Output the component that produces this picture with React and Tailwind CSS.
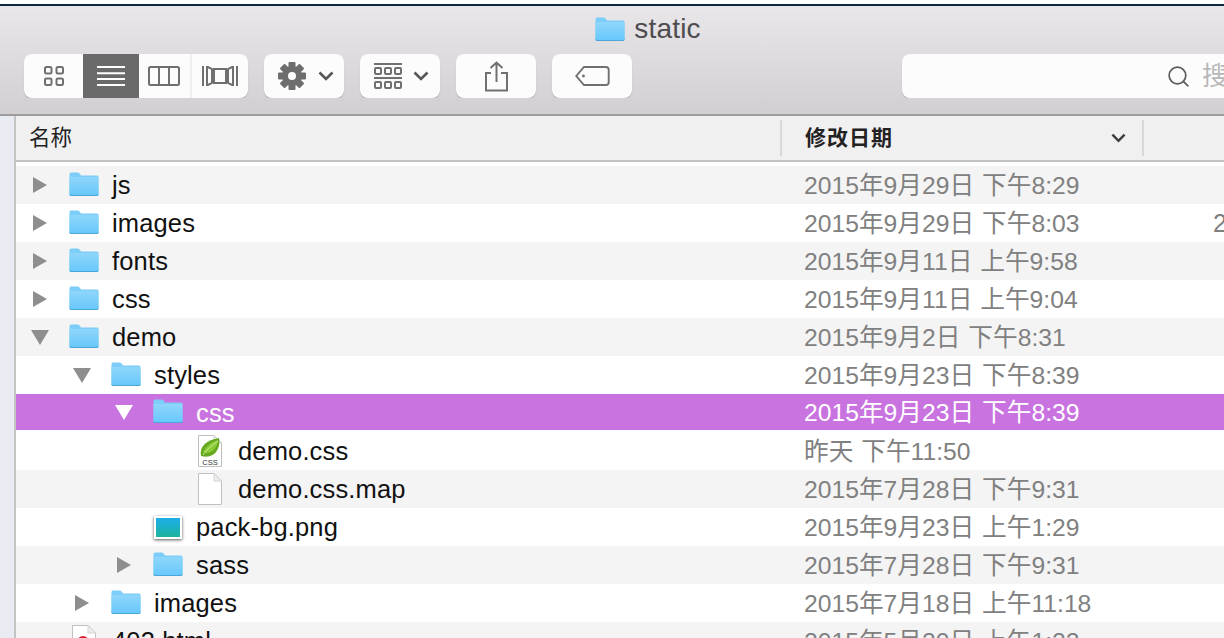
import { Search } from "lucide-react";

const FONT = "font-['Liberation_Sans','Noto_Sans_CJK_SC',sans-serif]";

const ROWS = [
  { name: "js", date: "2015年9月29日 下午8:29", depth: 0, arrow: "right", icon: "folder" },
  { name: "images", date: "2015年9月29日 下午8:03", depth: 0, arrow: "right", icon: "folder", size: "2" },
  { name: "fonts", date: "2015年9月11日 上午9:58", depth: 0, arrow: "right", icon: "folder" },
  { name: "css", date: "2015年9月11日 上午9:04", depth: 0, arrow: "right", icon: "folder" },
  { name: "demo", date: "2015年9月2日 下午8:31", depth: 0, arrow: "down", icon: "folder" },
  { name: "styles", date: "2015年9月23日 下午8:39", depth: 1, arrow: "down", icon: "folder" },
  { name: "css", date: "2015年9月23日 下午8:39", depth: 2, arrow: "down", icon: "folder", selected: true },
  { name: "demo.css", date: "昨天 下午11:50", depth: 3, icon: "css" },
  { name: "demo.css.map", date: "2015年7月28日 下午9:31", depth: 3, icon: "file" },
  { name: "pack-bg.png", date: "2015年9月23日 上午1:29", depth: 2, icon: "png" },
  { name: "sass", date: "2015年7月28日 下午9:31", depth: 2, arrow: "right", icon: "folder" },
  { name: "images", date: "2015年7月18日 上午11:18", depth: 1, arrow: "right", icon: "folder" },
  { name: "403.html", date: "2015年5月20日 上午1:22", depth: 0, icon: "html" },
];

function Folder({ className }) {
  return (
    <svg viewBox="0 0 30 24" className={className}>
      <defs>
        <linearGradient id="folderBody" x1="0" y1="0" x2="0" y2="1">
          <stop offset="0" stopColor="#8fd6fb" />
          <stop offset="1" stopColor="#68c8fb" />
        </linearGradient>
      </defs>
      <path d="M0.5 2 Q0.5 0.5 2 0.5 H9 Q10 0.5 11 2 L12 3.5 H28 Q29.5 3.5 29.5 5 V22 Q29.5 23.5 28 23.5 H2 Q0.5 23.5 0.5 22 Z" fill="#7ccdf7" />
      <path d="M0.5 5 H29.5 V22 Q29.5 23 28 23 H2 Q0.5 23 0.5 22 Z" fill="url(#folderBody)" />
      <path d="M0.5 22.4 Q0.7 23.5 2 23.5 H28 Q29.3 23.5 29.5 22.4" fill="none" stroke="#4ba6d8" strokeWidth="1" />
    </svg>
  );
}

function BlankFile({ children }) {
  return (
    <svg viewBox="0 0 24 32" className="w-[24px] h-[32px]">
      <path d="M0.5 0.5 H16 L23.5 8 V31.5 H0.5 Z" fill="#fff" stroke="#c0c0c0" strokeWidth="1" />
      <path d="M16 0.5 V8 H23.5 Z" fill="#ececec" stroke="#d4d4d4" strokeWidth="1" />
      {children}
    </svg>
  );
}

function RowIcon({ type }) {
  if (type === "folder") return <Folder className="w-[30px] h-[24px] mb-[2px]" />;
  if (type === "file") return <BlankFile />;
  if (type === "css") {
    return (
      <BlankFile>
        <path d="M3 21 C1 11 9 5 21 3 C23 13 17 23 6 21.5 Z" fill="#66a81f" />
        <path d="M5 17 C9 10 14 7 20 5 C20 11 15 18 8 18 Z" fill="#8ccc3a" />
        <path d="M5 20 C9 14 14 10 20 6" fill="none" stroke="#c3e88a" strokeWidth="1" />
        <text x="12" y="29.5" textAnchor="middle" fontSize="7.5" fontFamily="Liberation Sans" fill="#333">CSS</text>
      </BlankFile>
    );
  }
  if (type === "html") {
    return (
      <BlankFile>
        <circle cx="11" cy="17" r="6" fill="#d8232f" />
      </BlankFile>
    );
  }
  return (
    <div className="ml-[1px] w-[28px] h-[23px] border-[2px] border-white bg-gradient-to-b from-[#1eaeea] to-[#1fb29c] shadow-[0_1px_3px_rgba(0,0,0,0.65)]" />
  );
}

function Arrow({ dir, selected }) {
  const color = selected ? "#ffffff" : "#8e8e8e";
  return (
    <svg viewBox="0 0 18 16" className="w-[18px] h-[16px]">
      {dir === "right" ? <path d="M2 0 L16 8 L2 16 Z" fill={color} /> : <path d="M0 1 H18 L9 16 Z" fill={color} />}
    </svg>
  );
}

function Row({ row, index }) {
  const bg = row.selected ? "bg-[#c973e0] h-[36px] mb-[2px]" : index % 2 === 0 ? "bg-[#f4f4f4] h-[38px]" : "bg-white h-[38px]";
  const isFile = row.icon === "css" || row.icon === "file" || row.icon === "html";
  return (
    <div className={`flex items-center flex-none ${bg}`}>
      <div className="flex items-center w-[788px] flex-none h-full" style={{ paddingLeft: 6 + row.depth * 42 }}>
        <div className="w-[36px] flex-none flex justify-center">
          {row.arrow && <Arrow dir={row.arrow} selected={row.selected} />}
        </div>
        <div className={`w-[54px] flex-none flex items-center h-[34px] ${isFile ? "pl-[14px]" : "pl-[11px]"}`}>
          <RowIcon type={row.icon} />
        </div>
        <span className={`text-[25.5px] tracking-[0.15px] ${row.selected ? "text-white pt-[2px]" : "text-[#111]"}`}>{row.name}</span>
      </div>
      <div className={`w-[409px] flex-none text-[24.7px] [word-spacing:1px] pt-[2px] whitespace-nowrap ${row.selected ? "text-white" : "text-[#808080]"}`}>{row.date}</div>
      {row.size && <div className="text-[25px] pt-[2px] text-[#808080]">{row.size}</div>}
    </div>
  );
}

function ToolButton({ className, children }) {
  return (
    <div className={`h-[44px] flex items-center justify-center bg-[#fcfcfc] rounded-[8px] shadow-[0_1px_1px_rgba(0,0,0,0.18)] flex-none ${className}`}>
      {children}
    </div>
  );
}

function Chevron({ className = "w-[16px] h-[10px]", color = "#565656" }) {
  return (
    <svg viewBox="0 0 16 10" className={className}>
      <path d="M1.5 1.5 L8 8 L14.5 1.5" fill="none" stroke={color} strokeWidth="2.6" />
    </svg>
  );
}

function Gear() {
  const teeth = [0, 45, 90, 135];
  return (
    <svg viewBox="0 0 28 28" className="w-[28px] h-[28px]">
      {teeth.map((a) => (
        <rect key={a} x="10.5" y="0" width="7" height="28" rx="1" fill="#6e6e6e" transform={`rotate(${a} 14 14)`} />
      ))}
      <circle cx="14" cy="14" r="10" fill="#6e6e6e" />
      <circle cx="14" cy="14" r="4" fill="#fcfcfc" />
    </svg>
  );
}

function Toolbar() {
  return (
    <div className="flex items-start pl-[24px] gap-[16px] mt-[9px] overflow-hidden">
      <div className="flex h-[44px] flex-none w-[224px] rounded-[8px] overflow-hidden bg-[#fcfcfc] shadow-[0_1px_1px_rgba(0,0,0,0.18)]">
        <div className="w-[59px] flex items-center justify-center">
          <svg viewBox="0 0 20 20" className="w-[20px] h-[20px]" fill="none" stroke="#707070" strokeWidth="2">
            <rect x="1" y="1" width="6.5" height="6.5" rx="1.5" />
            <rect x="12.5" y="1" width="6.5" height="6.5" rx="1.5" />
            <rect x="1" y="12.5" width="6.5" height="6.5" rx="1.5" />
            <rect x="12.5" y="12.5" width="6.5" height="6.5" rx="1.5" />
          </svg>
        </div>
        <div className="w-[56px] flex items-center justify-center bg-[#6a6a6a]">
          <svg viewBox="0 0 28 20" className="w-[28px] h-[20px]" stroke="#ffffff" strokeWidth="2">
            <path d="M0 1 H28 M0 7.3 H28 M0 13 H28 M0 19 H28" />
          </svg>
        </div>
        <div className="w-[53px] flex items-center justify-center pr-[1px] border-r-2 border-[#eeeeee]">
          <svg viewBox="0 0 32 20" className="w-[32px] h-[20px]" fill="none" stroke="#707070" strokeWidth="2">
            <rect x="1" y="1" width="30" height="18" rx="1.5" />
            <path d="M11 1 V19 M21 1 V19" />
          </svg>
        </div>
        <div className="flex-1 flex items-center justify-center">
          <svg viewBox="0 0 36 20" className="w-[36px] h-[20px]" fill="none" stroke="#707070" strokeWidth="2">
            <path d="M1 0 V20 M5 0.5 L10 3 V17 L5 19.5 Z M35 0 V20 M31 0.5 L26 3 V17 L31 19.5 Z" />
            <rect x="12" y="3" width="12" height="14" />
          </svg>
        </div>
      </div>
      <ToolButton className="w-[80px] gap-[12px] pl-[3px]">
        <Gear />
        <Chevron />
      </ToolButton>
      <ToolButton className="w-[80px] gap-[11px] pl-[2px]">
        <svg viewBox="0 0 28 26" className="w-[28px] h-[26px]" fill="none" stroke="#707070" strokeWidth="2">
          <path d="M0 1 H28 M0 15 H28" />
          <rect x="1" y="5" width="6" height="6" rx="1" />
          <rect x="11" y="5" width="6" height="6" rx="1" />
          <rect x="21" y="5" width="6" height="6" rx="1" />
          <rect x="1" y="19" width="6" height="6" rx="1" />
          <rect x="11" y="19" width="6" height="6" rx="1" />
          <rect x="21" y="19" width="6" height="6" rx="1" />
        </svg>
        <Chevron />
      </ToolButton>
      <ToolButton className="w-[80px]">
        <svg viewBox="0 0 24 31" className="w-[24px] h-[31px]" fill="none" stroke="#707070" strokeWidth="2">
          <path d="M7 12 H2 V29.5 H23 V12 H17 M12.5 21 V2 M6.5 7 L12.5 1.5 L18.5 7" />
        </svg>
      </ToolButton>
      <ToolButton className="w-[80px]">
        <svg viewBox="0 0 36 21" className="w-[35px] h-[20px]" fill="none" stroke="#707070" strokeWidth="2">
          <path d="M9 1 H32 Q35 1 35 4 V17 Q35 20 32 20 H9 L1 10.5 Z" />
          <circle cx="8.5" cy="10.5" r="1.5" fill="#707070" stroke="none" />
        </svg>
      </ToolButton>
      <div className="ml-[254px] flex-none w-[340px] h-[44px] rounded-[8px] bg-[#fcfcfc] shadow-[0_1px_1px_rgba(0,0,0,0.18)] flex items-center pl-[264px] gap-[11px]">
        <Search className="w-[25px] h-[25px] text-[#5a5a5a] flex-none" strokeWidth={1.6} />
        <span className="text-[26px] text-[#b8b8b8] whitespace-nowrap">搜索</span>
      </div>
    </div>
  );
}

export default function App() {
  return (
    <div className={`w-[1224px] h-[638px] overflow-hidden flex flex-col bg-white ${FONT}`}>
      <div className="h-[4px] flex-none bg-white" />
      <div className="h-[2px] flex-none bg-[#0f2a3c]" />
      <div className="h-[110px] flex-none bg-gradient-to-b from-[#e9e7ea] to-[#d1cfd1] border-b-[2px] border-[#9c9c9c] flex flex-col">
        <div className="h-[39px] flex items-center justify-center gap-[9px] pt-[7px] pl-[72px] flex-none">
          <Folder className="w-[30px] h-[24px]" />
          <span className="text-[28px] tracking-[0.2px] text-[#4e4c4f]">static</span>
        </div>
        <Toolbar />
      </div>
      <div className="flex flex-1 min-h-0">
        <div className="w-[16px] flex-none bg-[#e8ecf2] border-r-[2px] border-[#c4c4c4]" />
        <div className="flex-1 min-w-0 flex flex-col">
          <div className="h-[46px] flex-none bg-[#f0f0f0] border-b-[2px] border-[#c2c2c2] flex items-center">
            <div className="w-[764px] flex-none pl-[13px] text-[21.5px] text-[#222]">名称</div>
            <div className="w-[2px] h-[36px] flex-none bg-[#d8d8d8]" />
            <div className="w-[360px] flex-none flex items-center justify-between pl-[23px] pr-[16px] text-[21px] font-bold text-[#222] tracking-[1px]">
              <span>修改日期</span>
              <Chevron className="w-[15px] h-[10px]" color="#3c3c3c" />
            </div>
            <div className="w-[2px] h-[36px] flex-none bg-[#d8d8d8]" />
          </div>
          <div className="h-[4px] flex-none bg-white" />
          {ROWS.map((row, i) => (
            <Row key={i} row={row} index={i} />
          ))}
        </div>
      </div>
    </div>
  );
}
